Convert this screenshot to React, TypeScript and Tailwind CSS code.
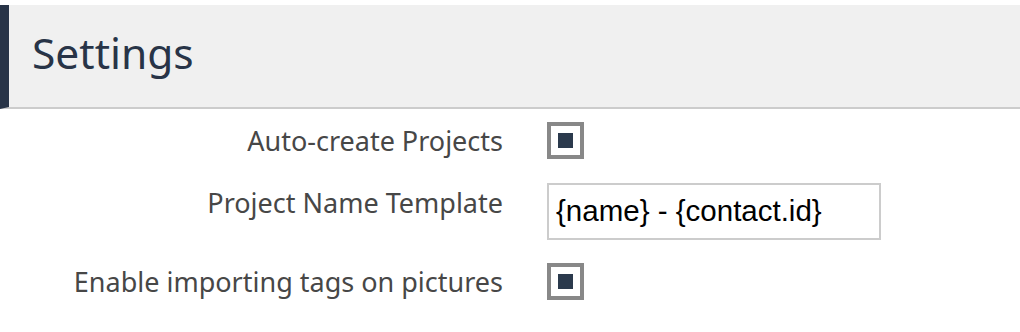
import React from "react";

function Check() {
  return (
    <div className="w-[37px] h-[37px] border-4 border-[#888888] bg-white flex items-center justify-center">
      <div className="w-[15px] h-[15px] bg-[#2b3a4d]" />
    </div>
  );
}

export default function App() {
  return (
    <div className="w-[1020px] h-[332px] bg-white overflow-hidden" style={{ fontFamily: "'Noto Sans', Lato, sans-serif" }}>
      <div className="mt-[5px] h-[104px] bg-[#f0f0f0] border-l-[9px] border-[#283447] border-b-2 border-b-[#cccccc] flex items-center pl-[23px] pb-[6px]">
        <h1 className="text-[42.5px] leading-none text-[#283447]">Settings</h1>
      </div>
      <div className="grid grid-cols-[503px_auto] gap-x-[44px] mt-[13px] items-start">
        <div className="text-right text-[27px] leading-[37px] text-[#474747]">Auto-create Projects</div>
        <Check />
        <div className="text-right text-[27px] leading-[37px] text-[#474747] mt-[24px] pt-[1px]">Project Name Template</div>
        <div className="mt-[24px] w-[334px] h-[57px] border-2 border-[#cccccc] bg-white flex items-center pl-[7px] text-[29.5px] text-black" style={{ fontFamily: "'Liberation Sans', Arial, sans-serif" }}>
          {"{name} - {contact.id}"}
        </div>
        <div className="text-right text-[27px] leading-[37px] text-[#474747] mt-[23px]">Enable importing tags on pictures</div>
        <div className="mt-[23px]"><Check /></div>
      </div>
    </div>
  );
}
